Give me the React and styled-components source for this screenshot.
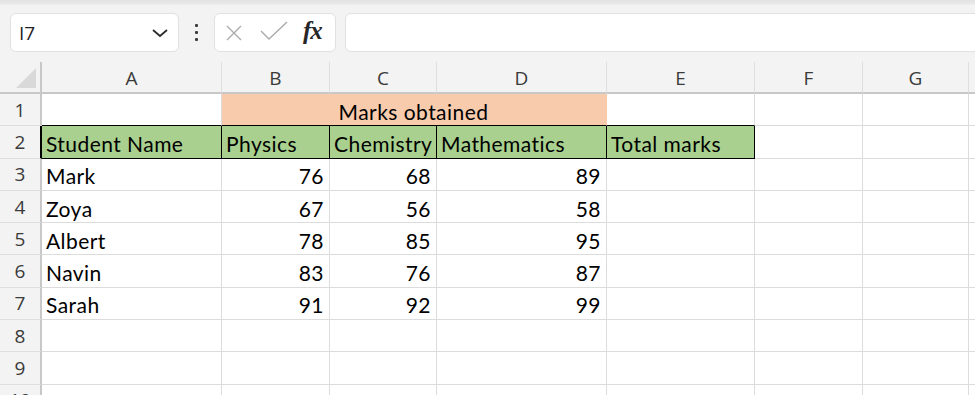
import React from 'react';
import styled, { createGlobalStyle } from 'styled-components';

const GlobalStyle = createGlobalStyle`
  html, body {
    margin: 0;
    padding: 0;
    background: #ffffff;
    overflow: hidden;
  }
`;

const columns = ['A', 'B', 'C', 'D', 'E', 'F', 'G', ''];

const students = [
  { name: 'Mark', physics: 76, chemistry: 68, maths: 89 },
  { name: 'Zoya', physics: 67, chemistry: 56, maths: 58 },
  { name: 'Albert', physics: 78, chemistry: 85, maths: 95 },
  { name: 'Navin', physics: 83, chemistry: 76, maths: 87 },
  { name: 'Sarah', physics: 91, chemistry: 92, maths: 99 },
];

const headings = ['Student Name', 'Physics', 'Chemistry', 'Mathematics', 'Total marks'];

const App = () => {
  return (
    <Page>
      <GlobalStyle />
      <TopShade />
      <Toolbar>
        <NameBox>
          <span>I7</span>
          <svg width="18" height="10" viewBox="0 0 18 10">
            <polyline points="2,2 9,8 16,2" fill="none" stroke="#2b2b2b" strokeWidth="1.8" />
          </svg>
        </NameBox>
        <Dots>
          <i />
          <i />
          <i />
        </Dots>
        <FxBox>
          <svg width="16" height="16" viewBox="0 0 16 16">
            <path d="M1 1 L15 15 M15 1 L1 15" stroke="#ababab" strokeWidth="1.4" />
          </svg>
          <svg width="28" height="20" viewBox="0 0 28 20">
            <polyline points="1,10 9,18 27,1" fill="none" stroke="#ababab" strokeWidth="1.4" />
          </svg>
          <FxLabel>fx</FxLabel>
        </FxBox>
        <FormulaInput />
      </Toolbar>

      <Sheet>
        <Corner>
          <svg width="22" height="22" viewBox="0 0 22 22">
            <polygon points="21,1 21,21 1,21" fill="#d9d9d9" />
          </svg>
        </Corner>
        {columns.map((c, i) => (
          <ColHead key={i}>{c}</ColHead>
        ))}

        {/* row 1 */}
        <RowHead>1</RowHead>
        <Cell $bottom="#000" />
        <Cell $span={3} $fill="#f8cbad" $right="#f8cbad" $bottom="#000" $align="center">
          Marks obtained
        </Cell>
        <Cell $bottom="#000" />
        <Cell />
        <Cell />
        <Cell />

        {/* row 2 */}
        <RowHead $edge="#000">2</RowHead>
        {headings.map((h) => (
          <Cell key={h} $fill="#a9d08e" $right="#000" $bottom="#000">
            {h}
          </Cell>
        ))}
        <Cell />
        <Cell />
        <Cell />

        {students.map((s, i) => (
          <React.Fragment key={s.name}>
            <RowHead>{i + 3}</RowHead>
            <Cell>{s.name}</Cell>
            <Cell $align="flex-end">{s.physics}</Cell>
            <Cell $align="flex-end">{s.chemistry}</Cell>
            <Cell $align="flex-end">{s.maths}</Cell>
            <Cell />
            <Cell />
            <Cell />
            <Cell />
          </React.Fragment>
        ))}

        {[8, 9, 10].map((n) => (
          <React.Fragment key={n}>
            <RowHead>{n}</RowHead>
            {columns.map((c, i) => (
              <Cell key={i} />
            ))}
          </React.Fragment>
        ))}
      </Sheet>
    </Page>
  );
};

const Page = styled.div`
  width: 975px;
  height: 395px;
  overflow: hidden;
  background: #ffffff;
`;

const TopShade = styled.div`
  height: 5px;
  background: linear-gradient(#e2e2e2, #ececec);
`;

const Toolbar = styled.div`
  height: 57px;
  box-sizing: border-box;
  padding: 8px 0 0 10px;
  background: #f3f3f3;
  display: flex;
  align-items: flex-start;
`;

const NameBox = styled.div`
  width: 169px;
  height: 39px;
  box-sizing: border-box;
  background: #ffffff;
  border: 1px solid #e1e1e1;
  border-radius: 6px;
  display: flex;
  align-items: center;
  justify-content: space-between;
  padding: 0 9px 0 8px;
  font-family: 'Open Sans', 'Noto Sans', sans-serif;
  font-size: 19px;
  color: #1f1f1f;
`;

const Dots = styled.div`
  width: 35px;
  height: 39px;
  display: flex;
  flex-direction: column;
  align-items: center;
  justify-content: center;
  gap: 3.5px;

  i {
    width: 3.5px;
    height: 3.5px;
    background: #3c3c3c;
    border-radius: 1px;
  }
`;

const FxBox = styled.div`
  width: 122px;
  height: 39px;
  box-sizing: border-box;
  background: #ffffff;
  border: 1px solid #e1e1e1;
  border-radius: 6px;
  display: flex;
  align-items: center;
  padding: 0 8px 0 11px;
  gap: 19px;

  svg:nth-child(2) {
    margin-left: -1px;
    margin-top: -3px;
  }
`;

const FxLabel = styled.span`
  font-family: 'Liberation Serif', serif;
  font-style: italic;
  font-weight: bold;
  font-size: 25px;
  color: #262626;
  margin-left: -4px;
  margin-top: -4px;
  letter-spacing: -1px;
`;

const FormulaInput = styled.div`
  flex: 1;
  height: 39px;
  margin-left: 9px;
  margin-right: -12px;
  box-sizing: border-box;
  background: #ffffff;
  border: 1px solid #e1e1e1;
  border-radius: 6px;
`;

const Sheet = styled.div`
  display: grid;
  grid-template-columns: 42px 180px 108px 107px 170px 148px 108px 106px 1fr;
  grid-template-rows: 32px;
  grid-auto-rows: 32.3px;
`;

const HeadBase = styled.div`
  box-sizing: border-box;
  background: #f3f3f3;
  display: flex;
  align-items: center;
  justify-content: center;
  font-family: 'Open Sans', 'Noto Sans', sans-serif;
  font-size: 19px;
  color: #3a3a3a;
`;

const Corner = styled(HeadBase)`
  border-right: 2px solid #c8c8c8;
  border-bottom: 2px solid #c8c8c8;
  justify-content: flex-end;
  align-items: flex-end;
  padding: 0 3px 3px 0;
`;

const ColHead = styled(HeadBase)`
  border-right: 1px solid #dedede;
  border-bottom: 2px solid #c8c8c8;
  padding-top: 2px;
`;

const RowHead = styled(HeadBase)`
  border-right: 2px solid ${(p) => p.$edge || '#c8c8c8'};
  border-bottom: 1px solid #dedede;
`;

const Cell = styled.div`
  box-sizing: border-box;
  grid-column: span ${(p) => p.$span || 1};
  background: ${(p) => p.$fill || '#ffffff'};
  border-right: 1px solid ${(p) => p.$right || '#dcdcdc'};
  border-bottom: 1px solid ${(p) => p.$bottom || '#dcdcdc'};
  display: flex;
  align-items: center;
  justify-content: ${(p) => p.$align || 'flex-start'};
  padding: 3px 5px 0 4px;
  font-family: Lato, 'Liberation Sans', sans-serif;
  font-size: 21px;
  letter-spacing: 0.45px;
  color: #000000;
  white-space: nowrap;
  overflow: hidden;
`;

export default App;
